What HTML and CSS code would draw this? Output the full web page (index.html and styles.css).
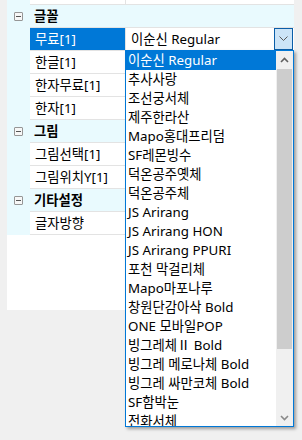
FILE: index.html
```html
<!DOCTYPE html>
<html lang="ko">
<head>
    <meta charset="UTF-8">
    <meta name="viewport" content="width=device-width, initial-scale=1.0">
    <title>속성</title>
    <link rel="stylesheet" href="styles.css">
</head>
<body>
    <div class="grid">
        <div class="row stub">
            <div class="margin"></div>
            <div class="name"></div>
            <div class="value"></div>
        </div>

        <!-- 글꼴 -->
        <div class="row category">
            <div class="margin"><span class="toggle"></span></div>
            <div class="label">글꼴</div>
        </div>
        <div class="row selected">
            <div class="margin"></div>
            <div class="name">무료[1]</div>
            <div class="value">
                <div class="combo">
                    <span class="combo-text">이순신 Regular</span>
                    <span class="combo-btn">
                        <svg width="9" height="6" viewBox="0 0 9 6"><path d="M0.5 0.5 L4.5 4.5 L8.5 0.5" fill="none" stroke="#5a5a5a" stroke-width="1"/></svg>
                    </span>
                </div>
            </div>
        </div>
        <div class="row">
            <div class="margin"></div>
            <div class="name">한글[1]</div>
            <div class="value"></div>
        </div>
        <div class="row">
            <div class="margin"></div>
            <div class="name">한자무료[1]</div>
            <div class="value"></div>
        </div>
        <div class="row">
            <div class="margin"></div>
            <div class="name">한자[1]</div>
            <div class="value"></div>
        </div>

        <!-- 그림 -->
        <div class="row category">
            <div class="margin"><span class="toggle"></span></div>
            <div class="label">그림</div>
        </div>
        <div class="row">
            <div class="margin"></div>
            <div class="name">그림선택[1]</div>
            <div class="value"></div>
        </div>
        <div class="row">
            <div class="margin"></div>
            <div class="name">그림위치Y[1]</div>
            <div class="value"></div>
        </div>

        <!-- 기타설정 -->
        <div class="row category">
            <div class="margin"><span class="toggle"></span></div>
            <div class="label">기타설정</div>
        </div>
        <div class="row">
            <div class="margin"></div>
            <div class="name">글자방향</div>
            <div class="value"></div>
        </div>
    </div>

    <!-- open font list -->
    <div class="dropdown">
        <ul class="items">
            <li class="active">이순신 Regular</li>
            <li>추사사랑</li>
            <li>조선궁서체</li>
            <li>제주한라산</li>
            <li>Mapo홍대프리덤</li>
            <li>SF레몬빙수</li>
            <li>덕온공주옛체</li>
            <li>덕온공주체</li>
            <li>JS Arirang</li>
            <li>JS Arirang HON</li>
            <li>JS Arirang PPURI</li>
            <li>포천 막걸리체</li>
            <li>Mapo마포나루</li>
            <li>창원단감아삭 Bold</li>
            <li>ONE 모바일POP</li>
            <li>빙그레체Ⅱ Bold</li>
            <li>빙그레 메로나체 Bold</li>
            <li>빙그레 싸만코체 Bold</li>
            <li>SF함박눈</li>
            <li>전화서체</li>
        </ul>
        <div class="scrollbar">
            <div class="arrow">
                <svg width="9" height="6" viewBox="0 0 9 6"><path d="M1 5 L4.5 1.5 L8 5" fill="none" stroke="#606060" stroke-width="1.6"/></svg>
            </div>
            <div class="track">
                <div class="thumb"></div>
            </div>
            <div class="arrow">
                <svg width="9" height="6" viewBox="0 0 9 6"><path d="M1 1 L4.5 4.5 L8 1" fill="none" stroke="#8a8a8a" stroke-width="1.6"/></svg>
            </div>
        </div>
    </div>
</body>
</html>
```

FILE: styles.css
```css
body {
    margin: 0;
    width: 302px;
    height: 440px;
    overflow: hidden;
    position: relative;
    background-color: #f0f0f0;
    font-family: "Noto Sans", "Noto Sans CJK KR", sans-serif;
    font-size: 13.33px;
    color: #000;
}
.grid {
    margin-left: 7px;
    width: 287px;
    height: 310px;
    background: #fff;
}
.row {
    display: flex;
    height: 23px;
}
.row.stub {
    height: 5px;
}
.margin {
    position: relative;
    flex: none;
    width: 23px;
    background: #e9fafe;
}
.name {
    flex: none;
    width: 96px;
    box-sizing: border-box;
    padding-left: 5px;
    border-right: 1px solid #e3e3e3;
    border-bottom: 1px solid #e3e3e3;
    line-height: 22px;
    white-space: nowrap;
    overflow: hidden;
}
.value {
    flex: 1;
    border-bottom: 1px solid #e3e3e3;
}
.selected .name {
    background: #0078d7;
    color: #fff;
}
.category .margin,
.category .label {
    background: #e9fafe;
}
.category .label {
    flex: 1;
    padding-left: 4px;
    border-bottom: 1px solid #e3e3e3;
    font-weight: bold;
    line-height: 22px;
}
.toggle {
    position: absolute;
    left: 7px;
    top: 7px;
    width: 9px;
    height: 9px;
    box-sizing: border-box;
    border: 1px solid #969696;
    border-radius: 1px;
    background: #f7f7f7;
}
.toggle::after {
    content: "";
    position: absolute;
    left: 1px;
    top: 3px;
    width: 5px;
    height: 1px;
    background: #555;
}
.combo {
    display: flex;
    height: 22px;
    margin-right: 1px;
    background: #fff;
}
.combo-text {
    flex: 1;
    padding-left: 5px;
    line-height: 22px;
}
.combo-btn {
    display: flex;
    align-items: center;
    justify-content: center;
    width: 19px;
    box-sizing: border-box;
    border: 1px solid #0a5ea8;
    background: #cce4f7;
}
.dropdown {
    position: absolute;
    left: 125px;
    top: 50px;
    width: 169px;
    height: 377px;
    box-sizing: border-box;
    display: flex;
    border: 1px solid #0078d7;
    background: #fff;
    box-shadow: 2px 2px 3px rgba(0, 0, 0, 0.35);
}
.items {
    flex: 1;
    margin: 0;
    padding: 0;
    list-style: none;
    overflow: hidden;
}
.items li {
    height: 19px;
    padding-left: 2px;
    line-height: 19px;
    white-space: nowrap;
}
.items li.active {
    background: #0078d7;
    color: #fff;
}
.scrollbar {
    display: flex;
    flex-direction: column;
    width: 17px;
    background: #f0f0f0;
}
.arrow {
    display: flex;
    align-items: center;
    justify-content: center;
    height: 17px;
}
.track {
    flex: 1;
    padding: 1px 1px 0;
}
.thumb {
    height: 280px;
    background: #cdcdcd;
}
```
